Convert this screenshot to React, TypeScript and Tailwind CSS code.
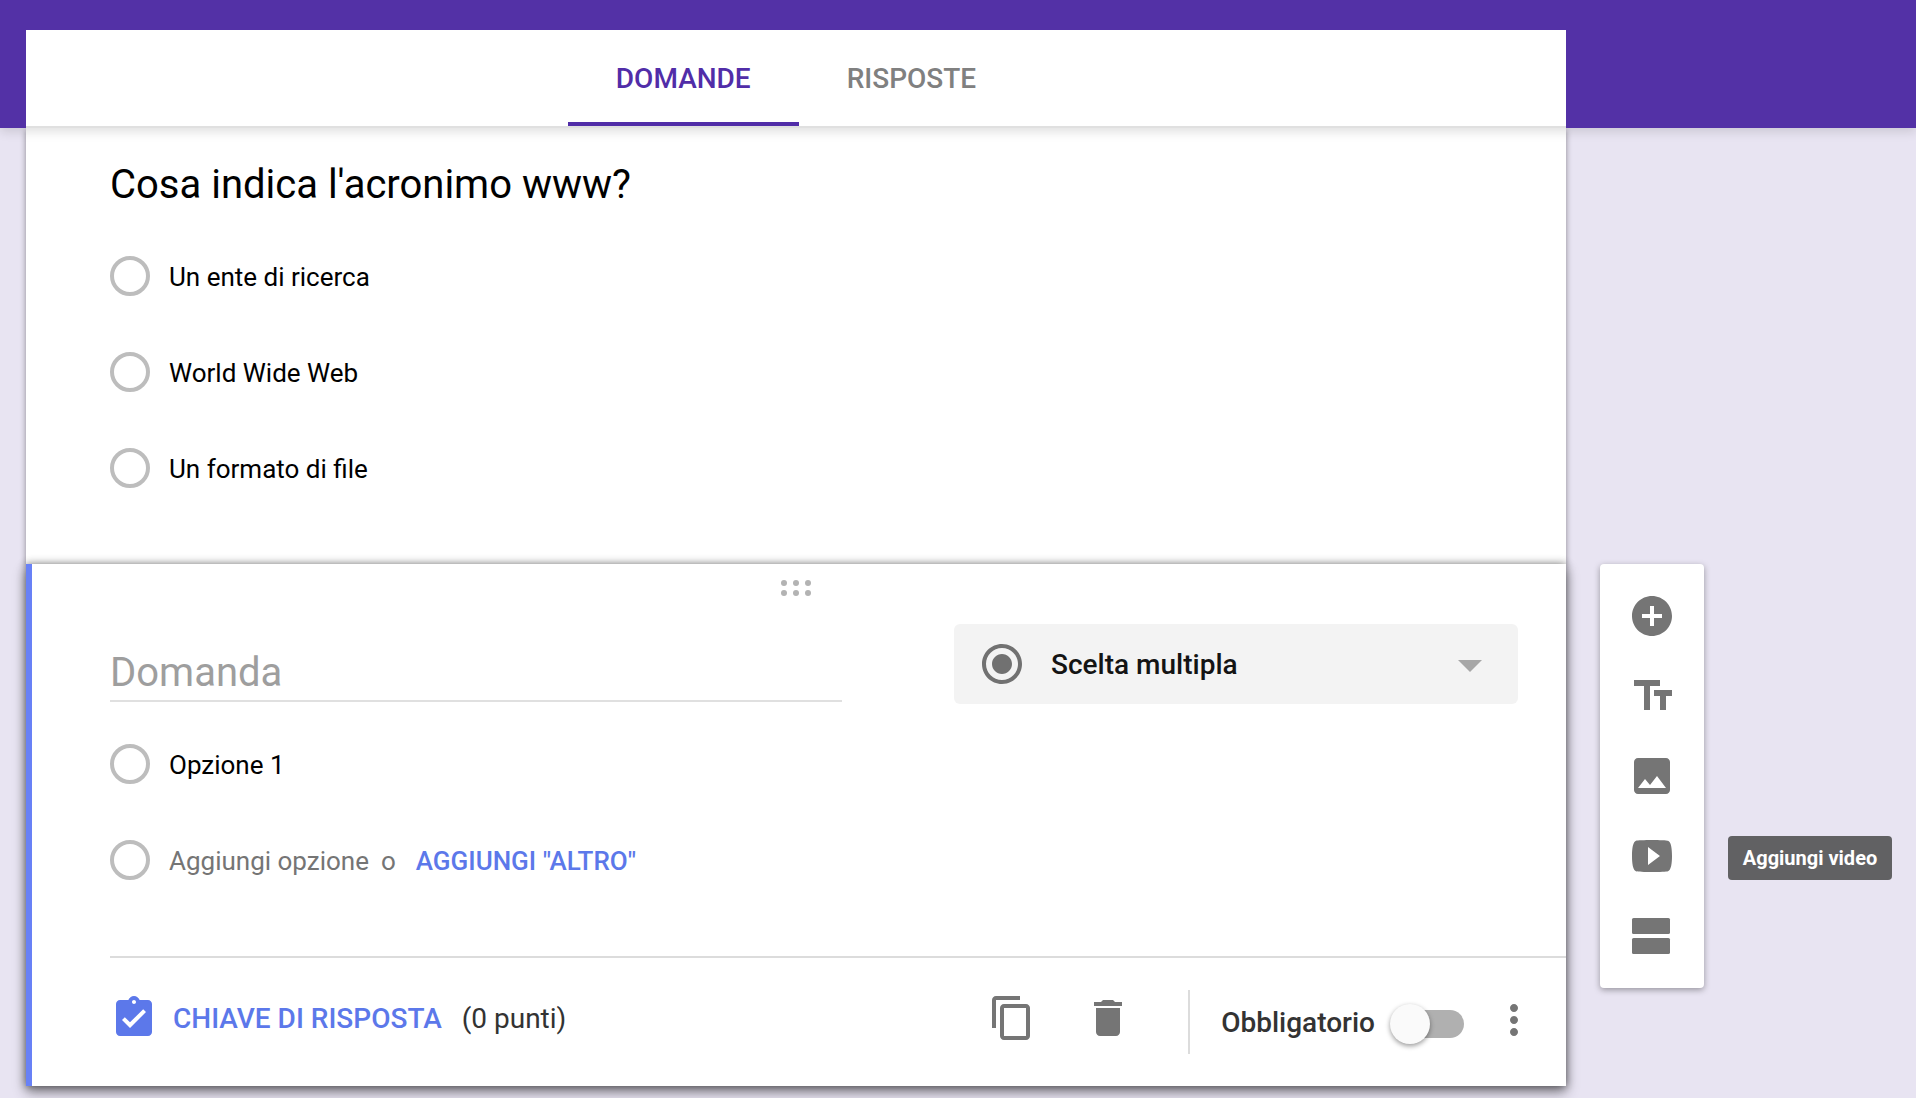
// Form editor: tab header, a saved question, the question being edited and
// the floating toolbar that sits next to it.

import type { ReactNode } from "react";
import {
  MdAddCircle,
  MdAssignmentTurnedIn,
  MdContentCopy,
  MdDelete,
  MdImage,
  MdMoreVert,
  MdRadioButtonChecked,
} from "react-icons/md";

const ANSWERS = ["Un ente di ricerca", "World Wide Web", "Un formato di file"];

const radioClass =
  "size-10 flex-none appearance-none rounded-full border-4 border-[#bdbdbd] bg-white";

function TextIcon() {
  return (
    <svg viewBox="0 0 24 24" className="size-12" fill="currentColor" aria-hidden="true">
      <path d="M3 4v3h5v12h3V7h5V4H3zm19 5h-9v3h3v7h3v-7h3V9z" />
    </svg>
  );
}

function VideoIcon() {
  return (
    <svg viewBox="0 0 24 24" className="size-12" fill="currentColor" aria-hidden="true">
      <path d="M10 16.5v-9l6 4.5M20 4.4c-.6-.2-4.3-.4-8-.4s-7.39.19-8 .38C2.44 4.9 2 8.4 2 12c0 3.59.44 7.1 2 7.61.61.2 4.3.39 8 .39 3.7 0 7.4-.2 8-.4 1.56-.5 2-4 2-7.6S21.56 4.91 20 4.4z" />
    </svg>
  );
}

function SectionIcon() {
  return (
    <svg viewBox="0 0 24 24" className="size-12" fill="currentColor" aria-hidden="true">
      <rect x="2" y="3" width="19" height="8" rx="0.8" />
      <rect x="2" y="13" width="19" height="8" rx="0.8" />
    </svg>
  );
}

function DragHandle() {
  return (
    <svg viewBox="0 0 30 16" className="mx-auto h-4 w-[30px]" fill="#b3b3b3" aria-hidden="true">
      {[3, 15, 27].map((x) => (
        <g key={x}>
          <circle cx={x} cy="3" r="3" />
          <circle cx={x} cy="13" r="3" />
        </g>
      ))}
    </svg>
  );
}

interface ToolProps {
  label: string;
  children: ReactNode;
  /** Shows the tooltip next to the button */
  hint?: boolean;
}

function Tool({ label, children, hint }: ToolProps) {
  return (
    <div className="relative flex h-20 items-center justify-center">
      <button type="button" aria-label={label}>
        {children}
      </button>
      {hint && (
        <span
          role="tooltip"
          className="absolute left-32 top-5 flex h-11 w-[164px] items-center justify-center whitespace-nowrap rounded bg-[#616163] text-xl font-bold text-white"
        >
          {label}
        </span>
      )}
    </div>
  );
}

function Header() {
  return (
    <header className="relative z-10 bg-[#5331a6] pl-[26px] pr-[350px] pt-[30px] shadow-[0_4px_10px_rgba(0,0,0,0.12)]">
      <nav className="flex h-[98px] justify-center border-b-2 border-[#e0e0e0] bg-white text-[28px] font-medium">
        <button type="button" className="border-b-4 border-[#512da8] px-12 pt-[6px] text-[#512da8]">
          DOMANDE
        </button>
        <button type="button" className="border-b-4 border-transparent px-12 pt-[6px] text-[#808080]">
          RISPOSTE
        </button>
      </nav>
    </header>
  );
}

function SavedQuestion() {
  return (
    <section className="bg-white pb-[76px] pl-[84px] pt-[33px] shadow-[0_2px_6px_rgba(0,0,0,0.4)]">
      <h2 className="text-[40px] leading-12 text-black">Cosa indica l'acronimo www?</h2>
      <div className="mt-[47px] flex flex-col gap-14">
        {ANSWERS.map((answer) => (
          <label key={answer} className="flex h-10 items-center gap-[19px] text-[26px] text-black">
            <input type="radio" name="www" className={radioClass} />
            <span className="pt-[2px]">{answer}</span>
          </label>
        ))}
      </div>
    </section>
  );
}

function QuestionFooter() {
  return (
    <footer className="ml-[84px] mt-[76px] flex h-[130px] items-center border-t-2 border-[#dcdcdc] pr-7 text-[28px] text-[#757575]">
      <div className="flex flex-1 items-center pb-2">
        <button type="button" className="flex items-center gap-[15px] font-medium text-[#5c78ea]">
          <MdAssignmentTurnedIn className="size-12" />
          <span className="pt-[2px]">CHIAVE DI RISPOSTA</span>
        </button>
        <span className="ml-5 pt-[2px] text-[#333333]">(0 punti)</span>
      </div>
      <div className="flex items-center gap-12 pb-2">
        <button type="button" aria-label="Duplica">
          <MdContentCopy className="size-12" />
        </button>
        <button type="button" aria-label="Elimina">
          <MdDelete className="size-12" />
        </button>
      </div>
      <div className="ml-14 mr-[31px] h-16 w-[2px] bg-[#dcdcdc]" />
      <label htmlFor="required" className="pt-[2px] font-medium text-[#333333]">
        Obbligatorio
      </label>
      <input
        id="required"
        type="checkbox"
        role="switch"
        className="relative ml-[19px] mt-1 h-7 w-[70px] appearance-none rounded-full bg-[#b0b0b0] before:absolute before:-left-1 before:-top-[6px] before:size-10 before:rounded-full before:bg-[#fafafa] before:shadow-[0_2px_5px_rgba(0,0,0,0.4)] before:content-['']"
      />
      <button type="button" aria-label="Altre opzioni" className="ml-[26px] pb-1">
        <MdMoreVert className="size-12" />
      </button>
    </footer>
  );
}

function ActiveQuestion() {
  return (
    <section className="relative bg-white pt-4 shadow-[inset_6px_0_0_#6881f6,0_0_8px_rgba(0,0,0,0.45),0_6px_12px_rgba(0,0,0,0.45)]">
      <DragHandle />
      <div className="mt-7 flex items-start gap-28 pl-[84px] pr-12">
        <input
          type="text"
          aria-label="Domanda"
          placeholder="Domanda"
          className="mt-[25px] min-w-0 flex-1 border-b-2 border-[#e0e0e0] pb-[3px] text-[40px] leading-12 outline-none placeholder:text-[#9e9e9e]"
        />
        <div className="relative w-[564px]">
          <select
            aria-label="Tipo di domanda"
            className="h-20 w-full appearance-none rounded-md bg-[#f3f3f3] pl-[97px] pt-[2px] text-[28px] font-medium text-[#141414]"
          >
            <option>Scelta multipla</option>
          </select>
          <MdRadioButtonChecked className="pointer-events-none absolute left-6 top-4 size-12 text-[#717171]" />
          <svg
            viewBox="0 0 24 12"
            className="pointer-events-none absolute right-9 top-9 h-3 w-6"
            fill="#a6a6a6"
            aria-hidden="true"
          >
            <path d="M0 0h24L12 12z" />
          </svg>
        </div>
      </div>
      <div className="mt-10 flex flex-col gap-14 pl-[84px] text-[26px]">
        <div className="flex h-10 items-center gap-[19px]">
          <input type="radio" name="new" aria-label="Opzione 1" className={radioClass} />
          <input
            type="text"
            aria-label="Testo opzione 1"
            defaultValue="Opzione 1"
            className="min-w-0 flex-1 pt-[2px] text-black outline-none"
          />
        </div>
        <div className="flex h-10 items-center gap-[19px] text-[#757575]">
          <input type="radio" name="new" aria-label="Nuova opzione" className={radioClass} />
          <div className="pt-[2px]">
            <button type="button">Aggiungi opzione</button>
            <span className="ml-3">o</span>
            <button type="button" className="ml-5 font-medium text-[#5c78ea]">
              AGGIUNGI "ALTRO"
            </button>
          </div>
        </div>
      </div>
      <QuestionFooter />
    </section>
  );
}

function Toolbar() {
  return (
    <aside className="ml-[34px] w-[104px] self-start rounded bg-white py-3 text-[#757575] shadow-[0_2px_6px_rgba(0,0,0,0.35)]">
      <Tool label="Aggiungi domanda">
        <MdAddCircle className="size-12" />
      </Tool>
      <Tool label="Aggiungi titolo">
        <TextIcon />
      </Tool>
      <Tool label="Aggiungi immagine">
        <MdImage className="size-12" />
      </Tool>
      <Tool label="Aggiungi video" hint>
        <VideoIcon />
      </Tool>
      <Tool label="Aggiungi sezione">
        <SectionIcon />
      </Tool>
    </aside>
  );
}

export default function App() {
  return (
    <div className="min-h-screen bg-[#e8e4f2] pb-3 font-[Roboto,sans-serif]">
      <Header />
      <main className="grid grid-cols-[minmax(0,1fr)_350px] pl-[26px]">
        <SavedQuestion />
        <div />
        <ActiveQuestion />
        <Toolbar />
      </main>
    </div>
  );
}
